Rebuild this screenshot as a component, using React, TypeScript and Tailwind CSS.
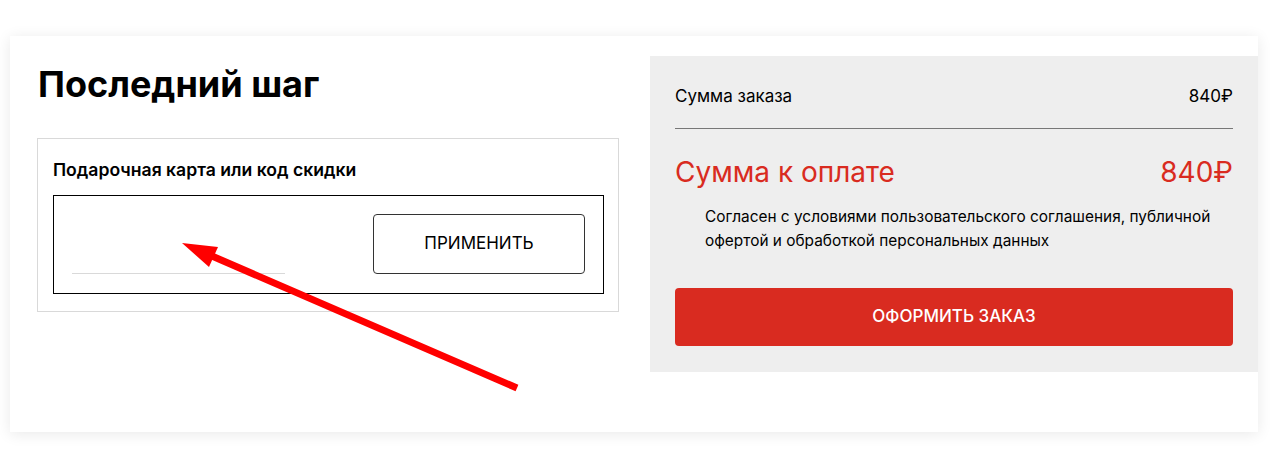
import React from "react";

export default function App() {
  return (
    <div className="relative w-[1286px] h-[464px] bg-white overflow-hidden" style={{ fontFamily: "Inter, Roboto, 'Noto Sans', sans-serif" }}>
      <div className="pt-[36px] pl-[10px]">
        <div className="w-[1248px] h-[396px] bg-white shadow-[0_2px_14px_rgba(0,0,0,0.09)] flex">
          {/* left column */}
          <div className="w-[640px] pl-[27px] pt-[26px]">
            <h1 className="text-[36px] leading-[44px] font-bold text-black pl-[1px]">Последний шаг</h1>
            <div className="mt-[32px] w-[582px] border border-[#d9d9d9] pt-[21px] pb-[17px] pl-[15px] pr-[14px]">
              <div className="text-[17.6px] leading-[20px] font-semibold text-black">Подарочная карта или код скидки</div>
              <div className="mt-[15px] h-[99px] border border-black flex items-start pl-[18px] pr-[18px] pt-[18px]">
                <div className="w-[213px] h-[60px] border-b border-[#d9d9d9]"></div>
                <button className="ml-auto w-[212px] h-[60px] border border-[#333] rounded-[4px] text-[17px] text-black bg-white">
                  ПРИМЕНИТЬ
                </button>
              </div>
            </div>
          </div>
          {/* right column */}
          <div className="w-[608px] h-[316px] mt-[20px] bg-[#eeeeee] px-[25px] pt-[28px]">
            <div className="flex justify-between text-[17px] leading-[24px] text-black">
              <span>Сумма заказа</span>
              <span>840₽</span>
            </div>
            <div className="mt-[20px] h-px bg-[#777777]"></div>
            <div className="mt-[26px] flex justify-between text-[28px] leading-[34px] text-[#d92b20]">
              <span>Сумма к оплате</span>
              <span>840₽</span>
            </div>
            <div className="mt-[16px] pl-[30px] text-[15.4px] leading-[24px] text-black">
              Согласен с условиями пользовательского соглашения, публичной<br />офертой и обработкой персональных данных
            </div>
            <button className="mt-[35px] w-full h-[58px] rounded-[4px] bg-[#d92b20] text-white text-[17px] font-medium uppercase">
              Оформить заказ
            </button>
          </div>
        </div>
      </div>
      {/* annotation arrow */}
      <svg className="absolute left-0 top-0 pointer-events-none" width="1286" height="464">
        <line x1="517" y1="388" x2="205" y2="253" stroke="#ff0000" strokeWidth="7" />
        <polygon points="182,243 218,247 209,267" fill="#ff0000" />
      </svg>
    </div>
  );
}
